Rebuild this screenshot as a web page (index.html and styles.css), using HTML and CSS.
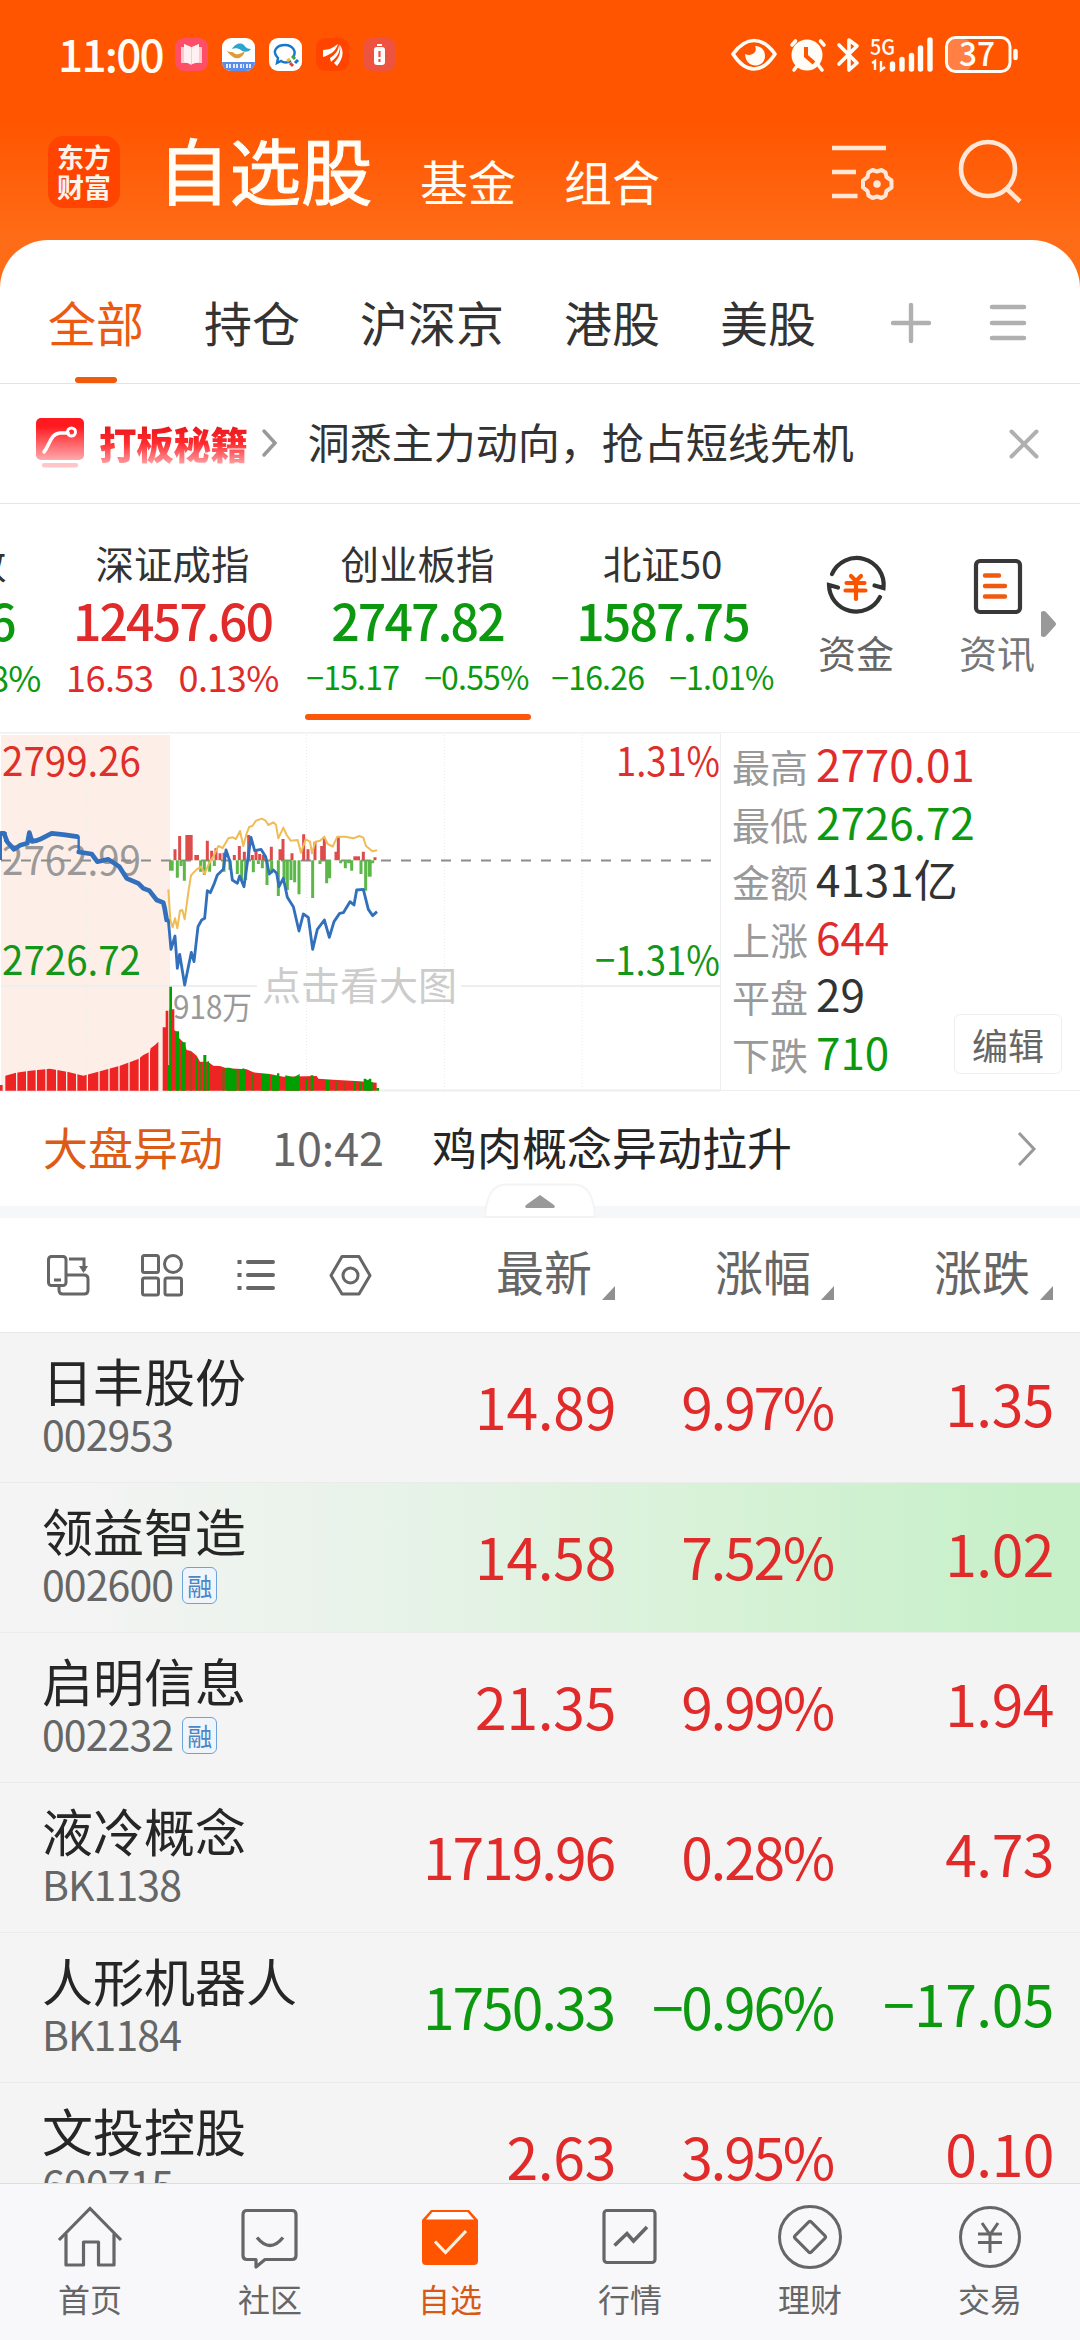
FILE: index.html
```html
<!DOCTYPE html>
<html lang="zh-CN">
<head>
<meta charset="utf-8">
<title>自选股</title>
<link rel="stylesheet" href="styles.css">
</head>
<body>
<div class="app">
  <header class="top">
    <div class="status">
      <span class="clock">11:00</span>
      <div class="notices">
        <svg viewBox="0 0 33 33"><rect width="33" height="33" rx="9" fill="#ff4f66"/><path d="M6 9h3V6l7 3 1 0 7-3v3h3v16h-8l-3 2-3-2H6z" fill="#ffc9d2"/><path d="M9 6l7 3v17l-7-2zM24 6l-7 3v17l7-2z" fill="#fff0f2"/></svg>
        <svg viewBox="0 0 33 33"><rect width="33" height="33" rx="9" fill="#fff"/><path d="M10 11c4-7 10-6 12-4 2 3 4 4 7 4-3 4-8 3-10 1-3-2-6-2-9-1z" fill="#2fa5cc"/><path d="M4 12c3 3 6 1 8 3 2 2 5 2 11-2-2 7-8 9-12 6-2-2-4-3-7-7z" fill="#e29a35"/><path d="M0 24h33a9 9 0 0 1-9 9H9a9 9 0 0 1-9-9z" fill="#5b8de8"/><path d="M4 28h5m2 0h5m2 0h4m2 0h5" stroke="#dfe9ff" stroke-width="4" stroke-dasharray="2 1"/></svg>
        <svg viewBox="0 0 33 33"><rect width="33" height="33" rx="9" fill="#fff"/><path d="M22 23c-4 2-7 2-10 0l-4 2 1-5c-7-7-1-13 7-13 8 0 12 7 8 12" fill="none" stroke="#1777c9" stroke-width="2.4"/><path d="M23 18l3 3" stroke="#39a845" stroke-width="3"/><path d="M29 22l-3 3" stroke="#1777c9" stroke-width="3"/><path d="M24 28l-3-3" stroke="#e2452e" stroke-width="3"/><path d="M18 23l3-2" stroke="#f5b82b" stroke-width="3"/></svg>
        <svg viewBox="0 0 33 33"><rect width="33" height="33" rx="9" fill="#ff4400"/><path d="M7 12C13 12 18 9 22 6 20 13 14 17 7 19zM14 20c5-3 9-8 9-14 3 7-3 14-8 18zM18 25c5-5 7-10 6-18 5 7 2 15-3 21z" fill="#fff"/></svg>
        <svg viewBox="0 0 33 33"><rect width="33" height="33" rx="9" fill="#ee5340"/><rect x="11" y="9" width="11" height="18" rx="3" fill="#fff"/><path d="M14 7h5" stroke="#fff" stroke-width="2"/><path d="M16.500 13v6m0 2v3" stroke="#ee5340" stroke-width="2.200"/></svg>
      </div>
      <svg class="signals" viewBox="728 32 292 42">
        <g fill="none" stroke="#fffdf6" stroke-width="3.600" stroke-linecap="round" stroke-linejoin="round">
          <path d="M733 53c13-18 29-18 42 0-13 20-29 20-42 0z"/>
          <path d="M792 44l3.500-4M820.500 40l3.500 4M794 69l3-4M822 69l-3-4"/>
          <path d="M839 44l18 18-8 7V39l8 6-18 18"/>
        </g>
        <path d="M745 53c1 16 20 14 20 2 0-7-5-10-10-10 3 6-3 11-10 8z" fill="#fffdf6"/>
        <circle cx="807" cy="54" r="15.500" fill="#fffdf6"/>
        <path d="M806 46v9l8 7" fill="none" stroke="#ff5500" stroke-width="4"/>
        <text x="870" y="53.500" textLength="25" lengthAdjust="spacingAndGlyphs" class="sig-label">5G</text>
        <path d="M872 62l3-2v9M881 60v9l4-3" fill="none" stroke="#fffdf6" stroke-width="2.400"/>
        <path d="M892.500 63v5M902 58.500v9.500M911.500 54.500v13.500M920.500 47v21M930 39v29" stroke="#fffdf6" stroke-width="5.400" stroke-linecap="round"/>
        <rect x="948" y="38" width="23" height="32" rx="7" fill="#ff7f45"/>
        <rect x="946.500" y="36.500" width="63.500" height="34" rx="9" fill="none" stroke="#fffdf6" stroke-width="3"/>
        <path d="M1015.500 50v7" stroke="#fffdf6" stroke-width="4.500" stroke-linecap="round"/>
        <text x="959" y="65" textLength="36" lengthAdjust="spacingAndGlyphs" class="bat-label">37</text>
      </svg>
    </div>
    <div class="titlebar">
      <div class="logo"><span>东方</span><span>财富</span></div>
      <h1>自选股</h1>
      <a class="switch">基金</a>
      <a class="switch">组合</a>
      <svg class="manage" viewBox="830 140 66 64"><g fill="none" stroke="#ffe7d8" stroke-width="4.600"><path d="M831 148h54M831 172h24M831 196h25.500"/><path d="M876 171.500l4.500-1.500 4 2.500 1 4.500 5 3.500v7l-5 3.500-1 4.500-4 2.500-4.500-1.500-4.500 1.500-4-2.500-1-4.500-4.500-3.500v-7l4.500-3.500 1-4.500 4-2.500z" stroke-linejoin="round" stroke-width="4"/></g><circle cx="876" cy="184" r="3.800" fill="#ffe7d8"/></svg>
      <svg class="search" viewBox="956 138 68 68"><g fill="none" stroke="#ffe7d8" stroke-width="4.600"><circle cx="987" cy="169" r="27"/><path d="M1005 188l14 13.500"/></g></svg>
    </div>
  </header>

  <main class="sheet">
    <nav class="tabs">
      <a class="on">全部</a><a>持仓</a><a>沪深京</a><a>港股</a><a>美股</a>
      <svg class="add" viewBox="0 0 40 40"><path d="M2 20h36M20 2v36" stroke="#b0b0b0" stroke-width="4.400" stroke-linecap="round"/></svg>
      <svg class="menu" viewBox="0 0 36 40"><path d="M2 4h32M2 20h32M2 35h32" stroke="#b0b0b0" stroke-width="4.600" stroke-linecap="round"/></svg>
    </nav>

    <section class="promo">
      <svg class="promo-logo" viewBox="0 0 48 50"><defs><linearGradient id="pg" x2="0" y2="1"><stop offset=".2" stop-color="#ff1a1f"/><stop offset="1" stop-color="#ffa9ad"/></linearGradient></defs><rect width="48" height="42" rx="5" fill="url(#pg)"/><path d="M8 34c6-7 6-18 16-19h8" fill="none" stroke="#fff" stroke-width="3.600" stroke-linecap="round"/><circle cx="35.500" cy="14" r="4" fill="none" stroke="#fff" stroke-width="3"/><rect x="6" y="45" width="36" height="4.500" rx="2" fill="#ffc5c7"/></svg>
      <b>打板秘籍</b>
      <svg class="promo-more" viewBox="0 0 16 28"><path d="M2 2l11 12L2 26" fill="none" stroke="#999" stroke-width="3.500" stroke-linecap="round"/></svg>
      <p>洞悉主力动向，抢占短线先机</p>
      <svg class="close" viewBox="0 0 30 30"><path d="M2.500 2.500l25 25M27.500 2.500l-25 25" stroke="#b0b0b0" stroke-width="4" stroke-linecap="round"/></svg>
    </section>

    <section class="indices">
      <div class="index cut down"><h3>数</h3><strong>6</strong><div class="delta"><span>8%</span></div></div>
      <div class="index up"><h3>深证成指</h3><strong>12457.60</strong><div class="delta"><span>16.53</span><span>0.13%</span></div></div>
      <div class="index down current"><h3>创业板指</h3><strong>2747.82</strong><div class="delta"><span>−15.17</span><span>−0.55%</span></div></div>
      <div class="index down"><h3>北证50</h3><strong>1587.75</strong><div class="delta"><span>−16.26</span><span>−1.01%</span></div></div>
      <a class="tool fund">
        <svg viewBox="0 0 60 62"><g fill="none" stroke="#333" stroke-width="4.200" stroke-linecap="round"><path d="M6 19A27 27 0 0 1 57.500 33l-9-2.500"/><path d="M54 42A27 27 0 0 1 3 30l9 2.500"/></g><path d="M25 21l5 5 5-5M20.500 28h18M19.500 35.500h20M30 27v17" fill="none" stroke="#f95500" stroke-width="4.200" stroke-linecap="round"/></svg>
        资金</a>
      <a class="tool info">
        <svg viewBox="0 0 60 62"><rect x="9" y="6" width="44" height="51" rx="4" fill="none" stroke="#383838" stroke-width="4.200"/><path d="M18 20.500h14M18 31h20M18 41.500h20" stroke="#ef5a10" stroke-width="4.400" stroke-linecap="round"/></svg>
        资讯</a>
      <svg class="more" viewBox="0 0 16 26"><path d="M0 1q3-2 5 0l9 10q2 2 0 4l-9 10q-2 2-5 0z" fill="#999"/></svg>
    </section>

    <section class="market">
      <svg class="chart" viewBox="0 732 721 359">
        <path d="M1 735h169v355H1z" fill="#fdeee8"/>
        <path d="M86.500 735v355M306.500 735v355M444.500 735v355M582 735v355" stroke="#ececec" stroke-dasharray="1 2"/>
        <path d="M1 986h256M461 986h259M1 1090.500h719" stroke="#eee" stroke-width="2"/>
        <path d="M720.500 734v356M0 733h721" stroke="#eee"/>
        <text x="2" y="875" textLength="139" lengthAdjust="spacingAndGlyphs" fill="#999" class="axis">2762.99</text>
        <path d="M1 860.500h719" stroke="#8c8c8c" stroke-width="1.800" stroke-dasharray="10 10"/>
        <g transform="translate(0 720) scale(.33333)" fill="none">
          <path fill="#ee2424" d="M0 1112V1095H8V1112zM16 1112V1067L48 1058 90 1052 150 1046 205 1056 250 1067 300 1054 360 1037 415 1017 430 1005 450 995 452 985 465 975 475 965V1112zM488 1112V922H497V872H505V1112z"/>
          <path d="M50 1040v72M80 1040v72M109 1040v72M138 1040v72M170 1040v72M200 1040v72M230 1040v72M262 1040v72M297 1040v72M327 1030v82M357 1020v92M387 1010v102M418 990v122M448 980v132" stroke="#fdeee8" stroke-width="4"/>
          <path fill="#ee2424" d="M508 1112V868H523V930L530 935 538 955 553 970 560 990 573 993 590 1007 600 1025 625 1026 640 1037 660 1038 680 1045 740 1048 760 1057 810 1062 850 1070 950 1068 955 1076 1000 1079 1080 1084 1130 1088V1112z"/>
          <path fill="#00a000" d="M508 1112V800H516V1112zM504 1035h4v77h-4zM528 934h9v178h-9zM544 967h13v145h-13zM572 1000h4v112h-4zM588 1015h5v97h-5zM598 1028h4v84h-4zM610 1005h9v107h-9zM622 1024h5v88h-5zM668 1046h5v66h-5zM678 1043h10l22 7v62h-32zM716 1050l15-5 6 4v63h-21zM757 1060h4v52h-4zM783 1062h26v50h-26zM816 1068h15v-8h7v52h-22zM856 1066l25 6 18-10v50h-43zM915 1076h7v36h-7zM932 1066h8v46h-8zM978 1080h10v32h-10zM1006 1082h4v30h-4zM1034 1084h4v28h-4zM1062 1085h5v27h-5zM1078 1087h5v25h-5zM1091 1076h6l6 5 6-5h5v10h4v26h-27zM1129 1104h8v8h-8z"/>
          <g stroke="#dd4b4b" stroke-width="9">
            <path d="M525 421V388M539 421V348M622 421V362M635 421V392M648 421V385M660 421V400M672 421V398M703 421V405M718 421V378M733 421V395M746 421V345M757 421V405M768 421V390M779 421V402M790 421V405M814 421V380M840 421V388M849 421V357M876 421V400M911 421V343M924 421V388M945 421V365M965 421V378M973 421V355M1008 421V395M1015 421V350M1090 421V395M1125 421V412"/>
            <path d="M567 421V345" stroke-width="22"/><path d="M590 421V405" stroke-width="14"/><path d="M1070 421V409" stroke-width="20"/>
          </g>
          <g stroke="#5cb749" stroke-width="9">
            <path d="M532 421V473M543 421V438M553 421V482M602 421V455M613 421V465M629 421V455M643 421V438M672 421V455M690 421V450M712 421V462M725 421V480M737 421V480M760 421V457M775 421V432M787 421V445M801 421V495M815 421V460M835 421V528M852 421V480M862 421V510M873 421V480M884 421V487M897 421V523M938 421V534M960 421V432M980 421V490M989 421V475M1022 421V430M1036 421V445M1046 421V430M1055 421V452M1083 421V462M1097 421V512M1118 421V430"/>
            <path d="M514 421V452" stroke-width="14"/><path d="M1109 421V470" stroke-width="12"/>
          </g>
          <path stroke="#f0bc55" stroke-width="6" stroke-linejoin="round" d="M505 508L511 600 518 622 525 595 532 625 540 572 547 570 554 598 566 510 573 466 590 448 603 440 614 462 627 430 640 410 655 378 668 384 685 355 698 352 708 357 720 333 730 378 740 340 748 320 757 318 768 302 785 296 797 302 805 315 820 307 828 314 835 355 850 323 860 345 872 362 893 360 903 398 917 358 930 365 936 400 946 365 960 362 973 350 983 372 998 380 1012 350 1035 350 1060 355 1078 348 1090 353 1098 378 1117 394 1131 391"/>
          <path stroke="#3270bd" stroke-width="8.500" stroke-linejoin="round" d="M500 598L505 600 513 688 525 648 532 745 539 703 554 795 574 697 582 725 594 620 605 600 614 595 622 512 631 518 643 490 652 465 670 448 678 390 690 425 697 480 712 490 719 468 732 500 746 400 753 352 764 392 783 388 797 410 808 462 820 450 830 460 837 500 850 475 862 532 880 560 897 633 910 582 925 592 938 688 952 628 973 600 988 652 1002 605 1019 580 1030 578 1050 545 1062 555 1070 510 1090 508 1105 568 1118 587 1131 575"/>
          <path stroke="#3270bd" stroke-width="8" d="M2 420V340H16V365"/>
          <path stroke="#3270bd" stroke-width="14" stroke-linejoin="round" stroke-linecap="round" d="M4 340H12L22 366 42 388 60 376 82 370 88 338 96 364 108 362 120 358 155 340 190 344 232 350"/>
          <path stroke="#3270bd" stroke-width="7" d="M236 350V395"/>
          <path stroke="#3270bd" stroke-width="14" stroke-linejoin="round" stroke-linecap="round" d="M236 396L275 402 292 425 325 418 358 440 380 475 415 490 430 505 448 512 470 540 490 548 494 565 500 600"/>
        </g>
        <text x="2" y="775.500" textLength="139" lengthAdjust="spacingAndGlyphs" fill="#de2f2a" class="axis">2799.26</text>
        <text x="2" y="975" textLength="139" lengthAdjust="spacingAndGlyphs" fill="#14961a" class="axis">2726.72</text>
        <text x="616" y="775.500" textLength="104" lengthAdjust="spacingAndGlyphs" fill="#de2f2a" class="axis">1.31%</text>
        <text x="595" y="975" textLength="125" lengthAdjust="spacingAndGlyphs" fill="#14961a" class="axis">−1.31%</text>
        <text x="173" y="1018.500" textLength="79" lengthAdjust="spacingAndGlyphs" fill="#999" class="vol">918万</text>
        <text x="262" y="1000" textLength="195" lengthAdjust="spacingAndGlyphs" fill="#ccc" class="hint">点击看大图</text>
      </svg>
      <dl class="stats">
        <div><dt>最高</dt><dd class="up">2770.01</dd></div>
        <div><dt>最低</dt><dd class="down">2726.72</dd></div>
        <div><dt>金额</dt><dd>4131亿</dd></div>
        <div><dt>上涨</dt><dd class="up">644</dd></div>
        <div><dt>平盘</dt><dd>29</dd></div>
        <div><dt>下跌</dt><dd class="down">710</dd></div>
      </dl>
      <button class="edit">编辑</button>
    </section>

    <section class="news">
      <span class="tag">大盘异动</span><time>10:42</time><p>鸡肉概念异动拉升</p>
      <svg class="go" viewBox="0 0 20 36"><path d="M2 2l15 16L2 34" fill="none" stroke="#999" stroke-width="3"/></svg>
      <svg class="handle" viewBox="0 0 112 36"><path d="M1 35Q2 2 22 1.500H90Q110 2 111 35" fill="#fff" stroke="#f3f4f6" stroke-width="2"/><path d="M1 34h110" stroke="#f3f3f3" stroke-width="2"/><path d="M56 12l14 10q2 3-1 3H43q-3 0-1-3z" fill="#999"/></svg>
    </section>

    <section class="toolbar">
      <svg viewBox="0 0 44 44"><g fill="none" stroke="#666" stroke-width="3"><rect x="2.500" y="3.500" width="17.500" height="29" rx="3"/><path d="M8 27h7M23 6h15v12M13 33v4q0 4 4 4h21q4 0 4-4V26q0-4-4-4H21"/></g><path d="M33 13h9l-4.500 7z" fill="#666"/></svg>
      <svg viewBox="0 0 44 44"><g fill="none" stroke="#666" stroke-width="3"><rect x="2.500" y="2.500" width="16" height="17" rx="2"/><ellipse cx="33" cy="11" rx="8.500" ry="8.500"/><rect x="2.500" y="25" width="16" height="17" rx="2"/><rect x="25" y="25" width="16.500" height="17" rx="2"/></g></svg>
      <svg viewBox="0 0 44 44"><path d="M14 9h25M14 22h25M14 35h25" stroke="#666" stroke-width="4" stroke-linecap="round"/><path d="M5.500 7v4M5.500 20v4M5.500 33v4" stroke="#666" stroke-width="4"/></svg>
      <svg viewBox="0 0 44 44"><path d="M14 3.500h17L42 22.500 31 41H14L3 22.500z" fill="none" stroke="#666" stroke-width="3" stroke-linejoin="round"/><circle cx="22.500" cy="22.500" r="7.500" fill="none" stroke="#666" stroke-width="3"/></svg>
      <span class="col latest">最新</span><span class="col pct">涨幅</span><span class="col chg">涨跌</span>
    </section>

    <section class="list">
      <div class="row up"><div class="stock"><h4>日丰股份</h4><p>002953</p></div><b>14.89</b><b class="p">9.97%</b><b class="c">1.35</b></div>
      <div class="row up flash"><div class="stock"><h4>领益智造</h4><p>002600<i>融</i></p></div><b>14.58</b><b class="p">7.52%</b><b class="c">1.02</b></div>
      <div class="row up"><div class="stock"><h4>启明信息</h4><p>002232<i>融</i></p></div><b>21.35</b><b class="p">9.99%</b><b class="c">1.94</b></div>
      <div class="row up"><div class="stock"><h4>液冷概念</h4><p class="bk">BK1138</p></div><b class="long">1719.96</b><b class="p">0.28%</b><b class="c">4.73</b></div>
      <div class="row down"><div class="stock"><h4>人形机器人</h4><p class="bk">BK1184</p></div><b class="long">1750.33</b><b class="p">−0.96%</b><b class="c">−17.05</b></div>
      <div class="row up"><div class="stock"><h4>文投控股</h4><p>600715</p></div><b>2.63</b><b class="p">3.95%</b><b class="c">0.10</b></div>
    </section>
  </main>

  <nav class="dock">
    <a><svg viewBox="0 0 66 66"><g fill="none" stroke="#666" stroke-width="3.200"><path d="M2 36L33 4.500 64 36"/><path d="M9 30v31h17.500V38h15v23H57V30" stroke-linejoin="round"/></g></svg>首页</a>
    <a><svg viewBox="0 0 66 66"><g fill="none" stroke="#666" stroke-width="3.200" stroke-linejoin="round"><path d="M10 6.500h45q4 0 4 4v41q0 4-4 4H28l-9 7.500v-7.500H10q-4 0-4-4v-41q0-4 4-4z"/><path d="M20 33.500q13 16 26 0" stroke-width="3.400"/></g></svg>社区</a>
    <a class="on"><svg viewBox="0 0 66 66"><path d="M14 6h38l9 10v41q0 4-4 4H9q-4 0-4-4V16z" fill="#ff5500"/><path d="M15.500 8h35l6.500 7.500H9z" fill="#fff"/><path d="M18 37.500l10.500 11L49 27" fill="none" stroke="#fff0dd" stroke-width="3.200"/></svg>自选</a>
    <a><svg viewBox="0 0 66 66"><g fill="none" stroke="#666" stroke-width="3.200"><rect x="7" y="6.500" width="51" height="52" rx="3"/><path d="M17.500 41.500L30 29.500l6.500 7.500L50 23" stroke-width="3.600"/></g></svg>行情</a>
    <a><svg viewBox="0 0 66 66"><g fill="none" stroke="#666" stroke-width="3"><circle cx="33" cy="33" r="30.500"/><rect x="21.500" y="21.500" width="23" height="23" rx="2" transform="rotate(45 33 33)"/></g></svg>理财</a>
    <a><svg viewBox="0 0 66 66"><g fill="none" stroke="#666" stroke-width="3"><circle cx="33" cy="33" r="29.500"/><path d="M25 19l8 11.500L41 19M21 30h24M21 38.500h24M33 30v19"/></g></svg>交易</a>
  </nav>
</div>
</body>
</html>
```
FILE: styles.css
```css
* { box-sizing: border-box; margin: 0; padding: 0; }
body {
  width: 1080px;
  height: 2340px;
  overflow: hidden;
  font-family: "Noto Sans CJK SC", sans-serif;
  font-weight: 400;
  color: #333;
  background: #fff;
}
svg { display: block; flex: none; overflow: visible; }
text { font-family: "Noto Sans CJK SC", sans-serif; }
h1, h3, h4, strong { font-weight: 400; }
.app { display: flex; flex-direction: column; height: 2340px; background: #fff; }
.up { color: #e12b2a; }
.down { color: #0c990f; }

/* header */
.top { height: 288px; flex: none; background: linear-gradient(#ff5500 0 120px, #ff6c17 240px, #ff6c17); }
.status { height: 108px; display: flex; align-items: center; padding: 0 60px 0 58px; }
.clock { width: 108px; font-size: 44px; font-weight: 500; letter-spacing: -1.700px; line-height: 62px; margin-top: -2px; color: #fffdf6; white-space: nowrap; }
.notices { display: flex; gap: 14px; margin-left: 9px; }
.notices svg { width: 33px; height: 33px; }
.signals { width: 292px; height: 42px; margin-left: auto; }
.sig-label { font-size: 22px; font-weight: 500; fill: #fffdf6; }
.bat-label { font-size: 33px; font-weight: 500; fill: #fffdf6; }
.titlebar { display: flex; height: 132px; padding-left: 48px; color: #fffdf6; }
.logo { width: 72px; height: 72px; margin-top: 28px; padding-top: 6px; border-radius: 15px; background: #ff4400; display: flex; flex-direction: column; align-items: center; font-size: 27px; line-height: 29.500px; font-weight: 700; color: #fff3ea; }
h1 { font-size: 71.500px; line-height: 100px; width: 215px; white-space: nowrap; margin: 10px 0 0 38px; -webkit-text-stroke: 1px #fffdf6; }
.switch { font-size: 48px; line-height: 70px; margin: 37px 0 0 47px; }
.switch + .switch { margin-left: 48px; }
.manage { width: 66px; height: 64px; margin: 32px 0 0 171px; }
.search { width: 68px; height: 68px; margin: 30px 0 0 60px; }

/* white sheet */
.sheet { flex: 1; min-height: 0; margin-top: -48px; border-radius: 48px 48px 0 0; background: #fff; overflow: hidden; }
.tabs { height: 144px; display: flex; gap: 60px; padding: 46px 0 0 48px; border-bottom: 1px solid #e3e3e3; font-size: 48px; line-height: 70px; }
.tabs a { height: 97px; white-space: nowrap; }
.tabs .on { color: #ec5a10; display: flex; flex-direction: column; align-items: center; justify-content: space-between; }
.tabs .on::after { content: ""; width: 42px; height: 6px; border-radius: 3px; background: #f05a0d; }
.add { width: 40px; height: 40px; margin: 17px 0 0 15px; }
.menu { width: 36px; height: 40px; margin: 17px 0 0 -1px; }

.promo { height: 120px; display: flex; align-items: center; padding: 0 41px 2px 36px; border-bottom: 1px solid #e6e6e6; }
.promo-logo { width: 48px; height: 50px; }
.promo b { margin-left: 15px; font-size: 37.500px; font-weight: 900; line-height: 56px; letter-spacing: -.3px; background: linear-gradient(#e8181c 20%, #ff2a2e 50%, #ffa0a4 88%); -webkit-background-clip: text; background-clip: text; color: transparent; }
.promo-more { width: 16px; height: 28px; margin-left: 14px; }
.promo p { font-size: 42px; line-height: 60px; margin: -4px auto 0 30px; color: #333; }
.close { width: 30px; height: 30px; margin-bottom: -2px; }

/* index strip */
.indices { height: 228px; display: flex; }
.index { width: 245px; flex: none; display: flex; flex-direction: column; align-items: center; padding-top: 30px; white-space: nowrap; }
.index h3 { font-size: 38.500px; line-height: 56px; color: #333; }
.index strong { font-size: 50px; line-height: 60px; margin-top: -1px; font-weight: 500; letter-spacing: -1.900px; }
.delta { display: flex; gap: 25px; font-size: 32px; line-height: 48px; margin-top: 3px; letter-spacing: -.8px; }
.index.up .delta { font-size: 36px; letter-spacing: -.5px; }
.current::after { content: ""; width: 226px; height: 6px; margin-top: 14px; border-radius: 3px; background: #fb560a; }
.cut { width: 50px; align-items: flex-start; overflow: hidden; }
.cut h3 { margin-left: -32px; }
.cut strong { margin-left: -12px; }
.cut .delta { margin-left: -11px; font-size: 36px; }
.tool { display: flex; flex-direction: column; align-items: center; width: 76px; font-size: 38px; line-height: 54px; color: #666; padding-top: 51px; white-space: nowrap; }
.tool svg { width: 60px; height: 62px; margin-bottom: 8px; }
.fund { margin-left: 33px; }
.info { margin-left: 65px; color: #777; }
.more { width: 16px; height: 26px; margin: 107px 0 0 6px; }

/* market chart */
.market { height: 359px; display: flex; border-top: 1px solid #f2f2f2; border-bottom: 1px solid #eee; }
.chart { width: 721px; height: 359px; margin-top: -1px; }
.axis { font-size: 40px; }
.vol { font-size: 32px; }
.hint { font-size: 39px; }
.stats { padding: 2px 0 0 11px; width: 210px; flex: none; }
.stats div { display: flex; height: 57.600px; line-height: 57.600px; align-items: baseline; white-space: nowrap; }
dt { flex: none; font-size: 38px; color: #999; width: 84px; }
dd { font-size: 44px; }
.edit { width: 108px; height: 60px; flex: none; margin: 281px 0 0 23px; font: 36px/56px "Noto Sans CJK SC", sans-serif; color: #666; background: #fff; border: 1px solid #eee; border-radius: 6px; }

/* news line */
.news { position: relative; height: 127px; display: flex; border-bottom: 12px solid #f6f7f9; font-size: 45px; line-height: 66px; padding: 23px 0 0 43px; white-space: nowrap; }
.tag { color: #dd5b15; }
time { margin-left: 49px; color: #666; letter-spacing: -.1px; }
.news p { margin-left: 48px; color: #262626; }
.go { width: 20px; height: 36px; margin: 17px 0 0 225px; }
.handle { position: absolute; left: 484px; top: 92px; width: 112px; height: 36px; }

/* toolbar */
.toolbar { height: 115px; display: flex; align-items: center; padding-left: 46px; gap: 50px; border-bottom: 1px solid #e8e8e8; }
.toolbar svg { width: 44px; height: 44px; }
.col { font-size: 48px; line-height: 70px; color: #666; display: flex; align-items: flex-end; gap: 10px; margin-top: -10px; }
.col::after { content: ""; border-left: 13px solid transparent; border-bottom: 14px solid #8f9092; margin-bottom: 5px; }
.latest { margin-left: 74px; }
.pct { margin-left: 50px; }
.chg { margin-left: 50px; }

/* stock list */
.row { height: 150px; display: grid; grid-template-columns: 320px 296px 219px 219px; background: #f4f4f4; border-bottom: 1px solid #ebebeb; white-space: nowrap; }
.flash { background: linear-gradient(90deg, #f4f4f4 0 6%, #e5f2e6 42%, #d8f2d8 65%, #c7f0c9 95%); }
.stock { padding: 17px 0 0 42px; }
.stock h4 { font-size: 51px; line-height: 60px; color: #262626; }
.stock p { font-size: 41px; line-height: 46px; letter-spacing: -.9px; color: #666; display: flex; align-items: center; }
.stock i { font: normal 25px/34px "Noto Sans CJK SC", sans-serif; letter-spacing: 0; width: 35px; height: 37px; text-align: center; color: #4b86c6; border: 1.500px solid #6ea3d8; border-radius: 6px; margin: 5px 0 0 9px; background: #eff5fb; }
.row b { font-weight: 400; font-size: 57px; line-height: 144px; text-align: right; letter-spacing: -.3px; }
.row .long { letter-spacing: -2.100px; padding-right: 2px; }
.row .p { letter-spacing: -2.300px; padding-right: 2px; }
.row .c { line-height: 139px; letter-spacing: -.5px; }

/* bottom bar */
.dock { height: 157px; flex: none; display: grid; grid-template-columns: repeat(6, 180px); border-top: 1px solid #dedede; background: #f8f8fa; position: relative; }
.dock a { display: flex; flex-direction: column; align-items: center; padding-top: 20px; font-size: 32px; line-height: 48px; color: #666; }
.dock svg { width: 66px; height: 66px; margin-bottom: 4px; }
.dock .on { color: #d65a16; }
```
